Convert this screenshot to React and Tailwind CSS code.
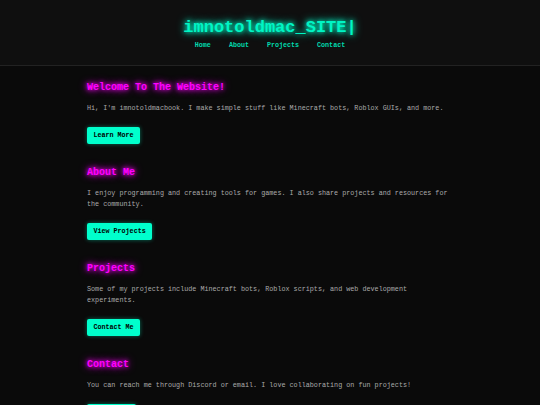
import React from "react";

const sections = [
  {
    title: "Welcome To The Website!",
    text: "Hi, I'm imnotoldmacbook. I make simple stuff like Minecraft bots, Roblox GUIs, and more.",
    button: "Learn More",
  },
  {
    title: "About Me",
    text: "I enjoy programming and creating tools for games. I also share projects and resources for the community.",
    button: "View Projects",
  },
  {
    title: "Projects",
    text: "Some of my projects include Minecraft bots, Roblox scripts, and web development experiments.",
    button: "Contact Me",
  },
  {
    title: "Contact",
    text: "You can reach me through Discord or email. I love collaborating on fun projects!",
    button: "Say Hello",
  },
];

const navLinks = ["Home", "About", "Projects", "Contact"];

// One block of content: heading, text, button
const Section = ({ title, text, button }) => (
  <section className="mb-[23px]">
    <h2 className="text-[10px] leading-[12px] font-bold text-[#ff00ff] [text-shadow:0_0_4px_#ff00ff,0_0_8px_#ff00ff] mb-[9px]">
      {title}
    </h2>
    <p className="text-[6.75px] leading-[10.4px] text-[#ababab] mb-[14px]">{text}</p>
    <button className="h-[17px] px-[6.5px] flex items-center rounded-[2px] bg-[#00ffcc] text-black font-bold text-[6.7px] leading-[7px] shadow-[0_0_4px_rgba(0,255,204,0.4)]">
      {button}
    </button>
  </section>
);

export default function App() {
  return (
    <div
      className="min-h-screen bg-[#0a0a0a] text-[#ababab]"
      style={{ fontFamily: '"Liberation Mono", "Courier New", monospace' }}
    >
      <header className="h-[66px] bg-[#0f0f0f] border-b border-[#222222] flex flex-col items-center pt-[18px]">
        <h1 className="text-[17px] leading-[20px] font-bold text-[#00f5c4] [text-shadow:0_0_5px_#00ffcc,0_0_10px_#00ffcc]">
          imnotoldmac_SITE|
        </h1>
        <nav className="flex gap-[18px] mt-[2px]">
          {navLinks.map((link) => (
            <a
              key={link}
              href="#"
              className="text-[6.7px] leading-[10px] font-bold text-[#00d9ad]"
            >
              {link}
            </a>
          ))}
        </nav>
      </header>

      <main className="w-[366px] mx-auto pt-[16px]">
        {sections.map((s) => (
          <Section key={s.title} {...s} />
        ))}
      </main>
    </div>
  );
}
